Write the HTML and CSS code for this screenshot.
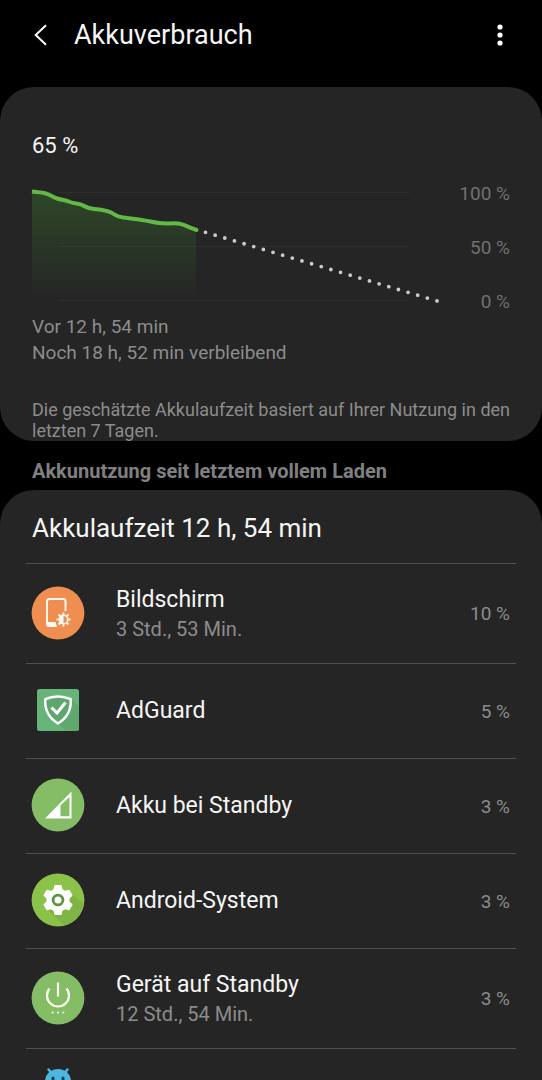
FILE: index.html
```html
<!DOCTYPE html>
<html lang="de">
<head>
<meta charset="utf-8">
<meta name="viewport" content="width=device-width, initial-scale=1">
<title>Akkuverbrauch</title>
<link rel="stylesheet" href="styles.css">
</head>
<body>
<header class="topbar">
  <button class="icon-button" type="button" aria-label="Zurück">
    <svg width="20" height="24" viewBox="0 0 20 24" fill="none" stroke="#fff" stroke-width="2"><path d="M16 2.300 5.700 12 16 21.700"/></svg>
  </button>
  <h1 class="title">Akkuverbrauch</h1>
  <button class="icon-button" type="button" aria-label="Weitere Optionen">
    <svg width="8" height="24" viewBox="0 0 8 24" fill="#fff"><circle cx="4" cy="4" r="2.600"/><circle cx="4" cy="12" r="2.600"/><circle cx="4" cy="20" r="2.600"/></svg>
  </button>
</header>
<main class="content">
  <section class="card summary">
    <p class="level">65 %</p>
    <div class="chart">
      <svg class="plot" viewBox="0 0 410 124" aria-hidden="true">
        <defs>
          <linearGradient id="fill" x1="0" y1="0" x2="0" y2="1">
            <stop offset="0" stop-color="#3a7a2c" stop-opacity=".4"/>
            <stop offset="1" stop-color="#3a7a2c" stop-opacity="0"/>
          </linearGradient>
        </defs>
        <path d="M27 12.500H378M27 66.500H378M27 120.500H378" stroke="#2e2e2e"/>
        <path d="M0 11.500 C6 12 10 12.500 14 13.500 S20 17 25 18.500 S33 20 38 22 S46 23 50 25 S56 28.500 62 29 S74 30 79 32.500 S85 37 91 37.500 S103 39 110 40 S120 42 127 43 S140 43 146 43.500 S156 47 164 50 V121 H0Z" fill="url(#fill)"/>
        <path d="M0 11.500 C6 12 10 12.500 14 13.500 S20 17 25 18.500 S33 20 38 22 S46 23 50 25 S56 28.500 62 29 S74 30 79 32.500 S85 37 91 37.500 S103 39 110 40 S120 42 127 43 S140 43 146 43.500 S156 47.500 165 50" fill="none" stroke="#63b946" stroke-width="4"/>
        <circle cx="164.500" cy="50" r="2" fill="#63b946"/>
        <path d="M173.500 52.300 405.200 121" fill="none" stroke="#c8cccf" stroke-width="3.800" stroke-linecap="round" stroke-dasharray="0 10.060"/>
      </svg>
      <div class="scale"><span>100 %</span><span>50 %</span><span>0 %</span></div>
    </div>
    <p class="times">Vor 12 h, 54 min<br>Noch 18 h, 52 min verbleibend</p>
    <p class="note">Die geschätzte Akkulaufzeit basiert auf Ihrer Nutzung in den letzten 7 Tagen.</p>
  </section>
  <h2 class="section-label">Akkunutzung seit letztem vollem Laden</h2>
  <section class="card usage">
    <h3 class="usage-title">Akkulaufzeit 12 h, 54 min</h3>
    <ul class="apps">
      <li class="app tall">
        <svg class="app-icon" viewBox="0 0 54 54" aria-hidden="true">
          <circle cx="27" cy="27" r="26.400" fill="#f08d50"/>
          <path d="M34.500 25V15.500Q34.500 13 32 13H18.500Q16 13 16 15.500V37.500Q16 40 18.500 40H25" fill="none" stroke="#fffaf0" stroke-width="1.900"/>
          <path d="M15.500 36H24.500L26 41H18Q15.500 41 15.500 38.500Z" fill="#fffaf0"/>
          <circle cx="32.500" cy="33.500" r="7.500" fill="#f08d50"/>
          <path d="M32.500 26.500V40.500M25.500 33.500H39.500M27.500 28.500 37.500 38.500M37.500 28.500 27.500 38.500" stroke="#fffaf0" stroke-width="1.900"/>
          <circle cx="32.500" cy="33.500" r="4.900" fill="#fffaf0"/>
          <path d="M32.500 30A3.500 3.500 0 0 1 32.500 37Z" fill="#f08d50"/>
        </svg>
        <div class="app-text"><span class="app-name">Bildschirm</span><span class="app-time">3 Std., 53 Min.</span></div>
        <span class="share">10 %</span>
      </li>
      <li class="app">
        <svg class="app-icon" viewBox="0 0 54 54" aria-hidden="true">
          <rect x="6" y="6" width="42" height="42" rx="2.500" fill="#67b479"/>
          <path d="M39 15 48 24V45.500Q48 48 45.500 48H35L26 40Z" fill="#5fa96f"/>
          <path d="M27 13.500Q34 13.500 39.700 16.200C40.500 27 36 35 27 40.500C18 35 13.500 27 14.300 16.200Q20 13.500 27 13.500Z" fill="#5da76d" stroke="#fff" stroke-width="2.500"/>
          <path d="M20.500 24.500 26 30 34.500 19.500" fill="none" stroke="#fff" stroke-width="3"/>
        </svg>
        <div class="app-text"><span class="app-name">AdGuard</span></div>
        <span class="share">5 %</span>
      </li>
      <li class="app">
        <svg class="app-icon" viewBox="0 0 54 54" aria-hidden="true">
          <circle cx="27" cy="27" r="26.400" fill="#84bd66"/>
          <path d="M14 40.500 40.500 13.500V40.500Z" fill="#fff"/>
          <path d="M29.500 27.200 38.500 19V38.300H29.500Z" fill="#84bd66"/>
        </svg>
        <div class="app-text"><span class="app-name">Akku bei Standby</span></div>
        <span class="share">3 %</span>
      </li>
      <li class="app">
        <svg class="app-icon" viewBox="0 0 54 54" aria-hidden="true">
          <circle cx="27" cy="27" r="26.400" fill="#8bc34a"/>
          <path d="M40 20 53 31A26.400 26.400 0 0 1 33 52.500L16 36Z" fill="#7fb544"/>
          <g fill="#fff" stroke="#fff" stroke-width="2" stroke-linejoin="round">
            <circle cx="27" cy="27" r="10.500"/>
            <path id="tooth" d="M24.300 13H29.700L31 19H23Z"/>
            <use href="#tooth" transform="rotate(60 27 27)"/>
            <use href="#tooth" transform="rotate(120 27 27)"/>
            <use href="#tooth" transform="rotate(180 27 27)"/>
            <use href="#tooth" transform="rotate(240 27 27)"/>
            <use href="#tooth" transform="rotate(300 27 27)"/>
          </g>
          <circle cx="27" cy="27" r="4.900" fill="#fff" stroke="#5f9440" stroke-width="2.800"/>
        </svg>
        <div class="app-text"><span class="app-name">Android-System</span></div>
        <span class="share">3 %</span>
      </li>
      <li class="app tall">
        <svg class="app-icon" viewBox="0 0 54 54" aria-hidden="true">
          <circle cx="27" cy="27" r="26.400" fill="#84bd66"/>
          <path d="M18.500 17.500A11 11 0 1 0 35.500 17.500M27 11.500V25.500" fill="none" stroke="#fffff0" stroke-width="2.200"/>
          <g fill="#fffff0"><circle cx="21.700" cy="41.500" r="1.100"/><circle cx="27" cy="41.500" r="1.100"/><circle cx="32.300" cy="41.500" r="1.100"/></g>
        </svg>
        <div class="app-text"><span class="app-name">Gerät auf Standby</span><span class="app-time">12 Std., 54 Min.</span></div>
        <span class="share">3 %</span>
      </li>
      <li class="app">
        <svg class="app-icon" viewBox="0 0 54 54" aria-hidden="true">
          <path d="M14 13A13 12 0 0 1 40 13V38H14Z" fill="#4cb8e0"/>
          <path d="M20.500 5 17.500 1.500M33.500 5 36.500 1.500" stroke="#4cb8e0" stroke-width="2.500" stroke-linecap="round"/>
          <path d="M22 10V13M32 10V13" stroke="#173c5c" stroke-width="3" stroke-linecap="round"/>
        </svg>
      </li>
    </ul>
  </section>
</main>
</body>
</html>
```
FILE: styles.css
```css
* {
  box-sizing: border-box;
  margin: 0;
  padding: 0;
}

body {
  height: 100vh;
  display: flex;
  flex-direction: column;
  overflow: hidden;
  background: #000;
  color: #f5f5f5;
  font-family: Roboto, "Liberation Sans", sans-serif;
}

.topbar {
  display: flex;
  align-items: center;
  flex-shrink: 0;
  padding: 16px 26px 32px 24px;
}

.icon-button {
  display: flex;
  align-items: center;
  justify-content: center;
  width: 32px;
  height: 39px;
  padding-bottom: 2px;
  background: none;
  border: 0;
  cursor: pointer;
}

.title {
  flex: 1;
  padding-left: 18px;
  font-size: 27px;
  font-weight: 400;
  line-height: 39px;
}

.content {
  flex: 1;
  overflow-y: auto;
  scrollbar-width: none;
}

.card {
  background: #252525;
  border-radius: 34px;
}

.summary {
  padding: 45px 32px 0;
}

.level {
  font-size: 22px;
  line-height: 28px;
}

.chart {
  display: flex;
  justify-content: space-between;
  padding-top: 20px;
}

.plot {
  flex: 0 1 410px;
  min-width: 0;
  overflow: visible;
}

.scale {
  display: flex;
  flex-direction: column;
  justify-content: space-between;
  color: #707070;
  font-size: 19px;
  line-height: 20px;
  text-align: right;
  white-space: nowrap;
  padding-top: 4px;
  margin-bottom: -8px;
}

.times {
  padding-top: 10px;
  color: #8c8c8c;
  font-size: 19px;
  line-height: 26px;
}

.note {
  margin-right: -16px;
  padding-top: 33px;
  color: #8c8c8c;
  font-size: 18px;
  line-height: 21px;
}

.section-label {
  padding: 18px 32px 7px;
  color: #808080;
  font-size: 20px;
  font-weight: 700;
  line-height: 24px;
}

.usage {
  padding: 0 26px;
}

.usage-title {
  padding: 21px 6px 18px;
  font-size: 26px;
  font-weight: 400;
  line-height: 34px;
}

.apps {
  list-style: none;
}

.app {
  display: flex;
  align-items: center;
  min-height: 95px;
  padding: 0 6px 0 5px;
  border-top: 1px solid #505050;
}

.app.tall {
  min-height: 100px;
}

.app-icon {
  flex: none;
  width: 54px;
  height: 54px;
  margin-bottom: 2px;
  overflow: visible;
}

.app-text {
  flex: 1;
  display: flex;
  flex-direction: column;
  padding-left: 31px;
}

.app-name {
  font-size: 23px;
  line-height: 30px;
}

.app-time {
  color: #8c8c8c;
  font-size: 20px;
  line-height: 28px;
}

.share {
  color: #8c8c8c;
  font-size: 19px;
}
```
